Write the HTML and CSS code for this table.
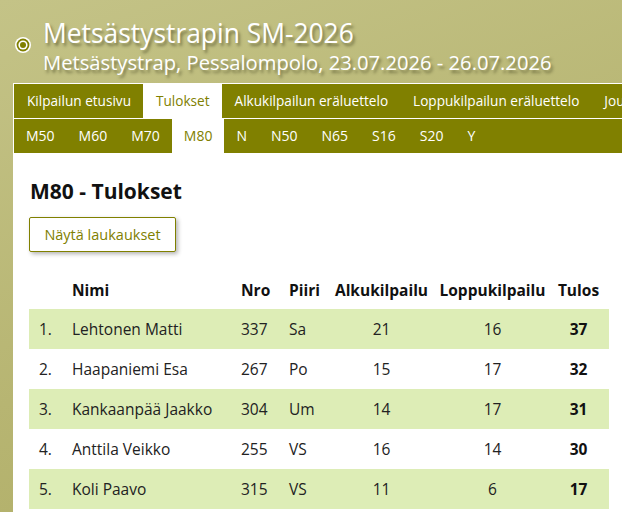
FILE: index.html
```html
<!DOCTYPE html>
<html lang="fi">
<head>
<meta charset="utf-8">
<title>Metsästystrapin SM-2026</title>
<link rel="stylesheet" href="styles.css">
</head>
<body>
<header class="site-header">
  <svg class="logo" width="16" height="16" viewBox="0 0 16 16" aria-hidden="true">
    <circle cx="8" cy="8" r="8" fill="#fff"/>
    <circle cx="8" cy="8" r="6.4" fill="#808000"/>
    <circle cx="8" cy="8" r="4.6" fill="#fff"/>
    <circle cx="8" cy="8" r="3" fill="#808000"/>
  </svg>
  <div class="titles">
    <h1 class="title">Metsästystrapin SM-2026</h1>
    <div class="subtitle">Metsästystrap, Pessalompolo, 23.07.2026 - 26.07.2026</div>
  </div>
</header>
<div class="page">
  <nav class="nav">
    <a class="nav-item">Kilpailun etusivu</a>
    <a class="nav-item active">Tulokset</a>
    <a class="nav-item">Alkukilpailun eräluettelo</a>
    <a class="nav-item">Loppukilpailun eräluettelo</a>
    <a class="nav-item">Joukkueet</a>
  </nav>
  <nav class="nav sub">
    <a class="nav-item">M50</a>
    <a class="nav-item">M60</a>
    <a class="nav-item">M70</a>
    <a class="nav-item active">M80</a>
    <a class="nav-item">N</a>
    <a class="nav-item">N50</a>
    <a class="nav-item">N65</a>
    <a class="nav-item">S16</a>
    <a class="nav-item">S20</a>
    <a class="nav-item">Y</a>
  </nav>
  <main class="content">
    <h2 class="heading">M80 - Tulokset</h2>
    <button class="btn">Näytä laukaukset</button>
    <table class="results">
      <colgroup>
        <col class="c-rank"><col class="c-name"><col class="c-nro"><col class="c-piiri"><col class="c-alku"><col class="c-loppu"><col class="c-tulos">
      </colgroup>
      <thead>
        <tr><th></th><th>Nimi</th><th>Nro</th><th>Piiri</th><th class="ctr">Alkukilpailu</th><th class="ctr">Loppukilpailu</th><th class="ctr">Tulos</th></tr>
      </thead>
      <tbody>
        <tr><td>1.</td><td>Lehtonen Matti</td><td>337</td><td>Sa</td><td class="ctr">21</td><td class="ctr">16</td><td class="ctr total">37</td></tr>
        <tr><td>2.</td><td>Haapaniemi Esa</td><td>267</td><td>Po</td><td class="ctr">15</td><td class="ctr">17</td><td class="ctr total">32</td></tr>
        <tr><td>3.</td><td>Kankaanpää Jaakko</td><td>304</td><td>Um</td><td class="ctr">14</td><td class="ctr">17</td><td class="ctr total">31</td></tr>
        <tr><td>4.</td><td>Anttila Veikko</td><td>255</td><td>VS</td><td class="ctr">16</td><td class="ctr">14</td><td class="ctr total">30</td></tr>
        <tr><td>5.</td><td>Koli Paavo</td><td>315</td><td>VS</td><td class="ctr">11</td><td class="ctr">6</td><td class="ctr total">17</td></tr>
      </tbody>
    </table>
  </main>
</div>
</body>
</html>
```
FILE: styles.css
```css
* { box-sizing: border-box; }
html, body { margin: 0; height: 100%; }
body {
  font-family: "Open Sans", "Noto Sans", sans-serif;
  color: #222;
  background: linear-gradient(160deg, #c4c387 0%, #b7b572 55%, #aeac63 100%);
  overflow: hidden;
}
.site-header {
  display: flex;
  align-items: flex-start;
  padding: 16px 0 0 15px;
  height: 83px;
}
.logo { margin-top: 21px; flex: none; }
.titles { margin-left: 12px; }
.title {
  margin: 0;
  font-size: 26.4px;
  font-weight: 400;
  line-height: 34px;
  color: #fff;
  text-shadow: 2px 3px 3px rgba(50, 50, 20, 0.5);
}
.subtitle {
  margin-top: -1px;
  font-size: 20.2px;
  line-height: 26px;
  color: #fff;
  text-shadow: 2px 3px 3px rgba(50, 50, 20, 0.5);
}
.page {
  margin-left: 13px;
  background: #fff;
  border-top: 1px solid #fff;
  border-left: 1px solid #fff;
  min-height: 430px;
}
.nav {
  display: flex;
  background: #808000;
  height: 34px;
  white-space: nowrap;
  overflow: hidden;
}
.nav.sub { margin-top: 1px; }
.nav-item {
  display: block;
  padding: 0 12px 0 13px;
  line-height: 34px;
  font-size: 13.6px;
  color: #fff;
  text-decoration: none;
}
.nav.sub .nav-item { padding: 0 12px; font-size: 14px; }
.nav-item.active { background: #fff; color: #808000; }
.content { padding: 24px 0 0 15px; }
.heading {
  margin: 0 0 0 1px;
  font-size: 21px;
  line-height: 28px;
  font-weight: 700;
  color: #111;
}
.btn {
  display: block;
  margin-top: 12px;
  width: 147px;
  height: 35px;
  background: #fff;
  border: 1px solid #808000;
  border-radius: 2px;
  color: #808000;
  font-family: inherit;
  font-size: 14.5px;
  box-shadow: 2px 2px 4px rgba(0, 0, 0, 0.3);
  padding: 0;
}
.results {
  margin-top: 19px;
  border-collapse: collapse;
  table-layout: fixed;
  width: 580px;
  font-size: 15.5px;
}
.c-rank { width: 33px; }
.c-name { width: 169px; }
.c-nro { width: 48px; }
.c-piiri { width: 47px; }
.c-alku { width: 111px; }
.c-loppu { width: 111px; }
.c-tulos { width: 61px; }
.results th, .results td {
  padding: 0 0 0 10px;
  text-align: left;
  white-space: nowrap;
}
.results th { height: 38px; font-weight: 700; color: #111; font-size: 15.5px; }
.results td { height: 40px; }
.results .ctr { text-align: center; padding: 0; }
.results tbody tr:nth-child(odd) { background: #ddedb6; }
.results .total { font-weight: 700; color: #111; }
```
